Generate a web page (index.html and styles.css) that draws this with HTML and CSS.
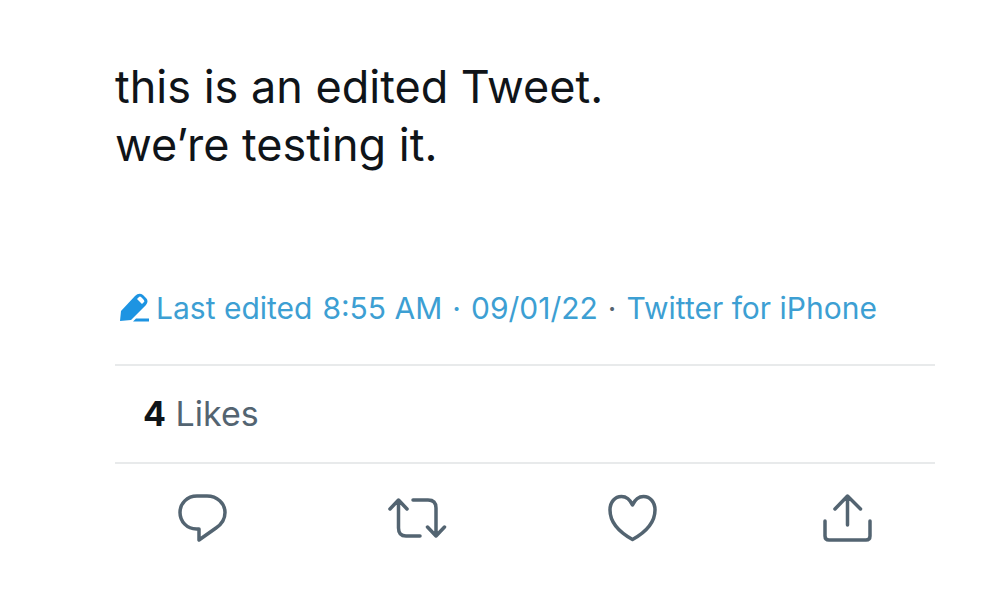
FILE: index.html
```html
<!DOCTYPE html>
<html lang="en">
<head>
    <meta charset="UTF-8">
    <meta name="viewport" content="width=device-width, initial-scale=1.0">
    <title>Tweet</title>
    <link rel="stylesheet" href="styles.css">
</head>
<body>
    <article class="tweet">
        <p class="tweet-text">this is an edited Tweet.<br>we’re testing it.</p>

        <div class="meta">
            <a href="#" class="edited">
                <svg class="pencil" viewBox="0 0 32 30" aria-hidden="true">
                    <path fill="currentColor" fill-rule="evenodd" d="M2 28 L3 18 L17 3 Q21 -1 25 2 L28 5 Q31 8 28 12 L13 27 Z M19 6 L24 11 L26 9 Q27 8 25 6 L23 4 Q22 3 21 4 Z"/>
                    <path fill="currentColor" d="M18 25.500h13v3H15z"/>
                </svg>
                <span>Last edited</span>
            </a>
            <span>8:55 AM</span>
            <span>·</span>
            <span>09/01/22</span>
            <span class="dot">·</span>
            <a href="#">Twitter for iPhone</a>
        </div>

        <div class="stats">
            <a href="#"><strong>4</strong> Likes</a>
        </div>

        <div class="actions">
            <button type="button" class="action" aria-label="Reply">
                <svg viewBox="0 0 60 60" stroke-width="3.500"><path d="M25 8H35C45 8 53 15 53 24.500C53 31 50 36 44 40L27 52V41H24.500C15 41 8 33.500 8 24.500C8 15.500 15 8 25 8Z"/></svg>
            </button>
            <button type="button" class="action" aria-label="Retweet">
                <svg viewBox="0 0 60 60" stroke-width="3.500"><path d="M3 21L11.500 12L20 21M11.500 13V40Q11.500 48 19 48H33M26 12H41Q49 12 49 20V48M40.500 39L49 48L57.500 39"/></svg>
            </button>
            <button type="button" class="action" aria-label="Like">
                <svg viewBox="0 0 60 60" stroke-width="3.500"><path d="M30.500 17C28 11.500 24 8.500 19.500 8.500C13 8.500 8 14 8 22C8 34 17 44 30.500 51.500C44 44 53 34 53 22C53 14 48 8.500 41.500 8.500C37 8.500 33 11.500 30.500 17Z"/></svg>
            </button>
            <button type="button" class="action" aria-label="Share">
                <svg viewBox="0 0 60 60" stroke-width="3.500"><path d="M18 21L30.500 8L43.500 21M30.500 9V37M8 33V48Q8 52 12 52H49Q53 52 53 48V33"/></svg>
            </button>
        </div>
    </article>
</body>
</html>
```

FILE: styles.css
```css
body {
    margin: 0;
    background-color: white;
    color: #0f1419;
    font-family: Inter, "Liberation Sans", sans-serif;
}
a {
    color: inherit;
    text-decoration: none;
}
.tweet {
    padding: 58px 62px 40px 115px;
}
.tweet-text {
    margin: 0;
    font-size: 45px;
    line-height: 58px;
}
.meta {
    display: flex;
    align-items: center;
    gap: 10px;
    margin-top: 114px;
    padding-bottom: 36px;
    border-bottom: 2px solid #e8eaeb;
    color: #3d9fd3;
    font-size: 30px;
    line-height: 40px;
    white-space: nowrap;
}
.edited {
    display: flex;
    align-items: center;
    gap: 6px;
    padding-left: 3px;
}
.pencil {
    width: 32px;
    height: 30px;
    color: #1d94e2;
}
.dot {
    color: #536471;
}
.stats {
    padding: 28px;
    border-bottom: 2px solid #e8eaeb;
    color: #536471;
    font-size: 34px;
    line-height: 40px;
}
.stats strong {
    color: #0f1419;
}
.actions {
    display: flex;
    justify-content: space-between;
    padding: 24px 58px 0 57px;
}
.action {
    padding: 0;
    border: none;
    background: none;
    color: #536471;
    cursor: pointer;
}
.action svg {
    display: block;
    width: 60px;
    height: 60px;
    fill: none;
    stroke: currentColor;
    stroke-linecap: round;
    stroke-linejoin: round;
}
```
